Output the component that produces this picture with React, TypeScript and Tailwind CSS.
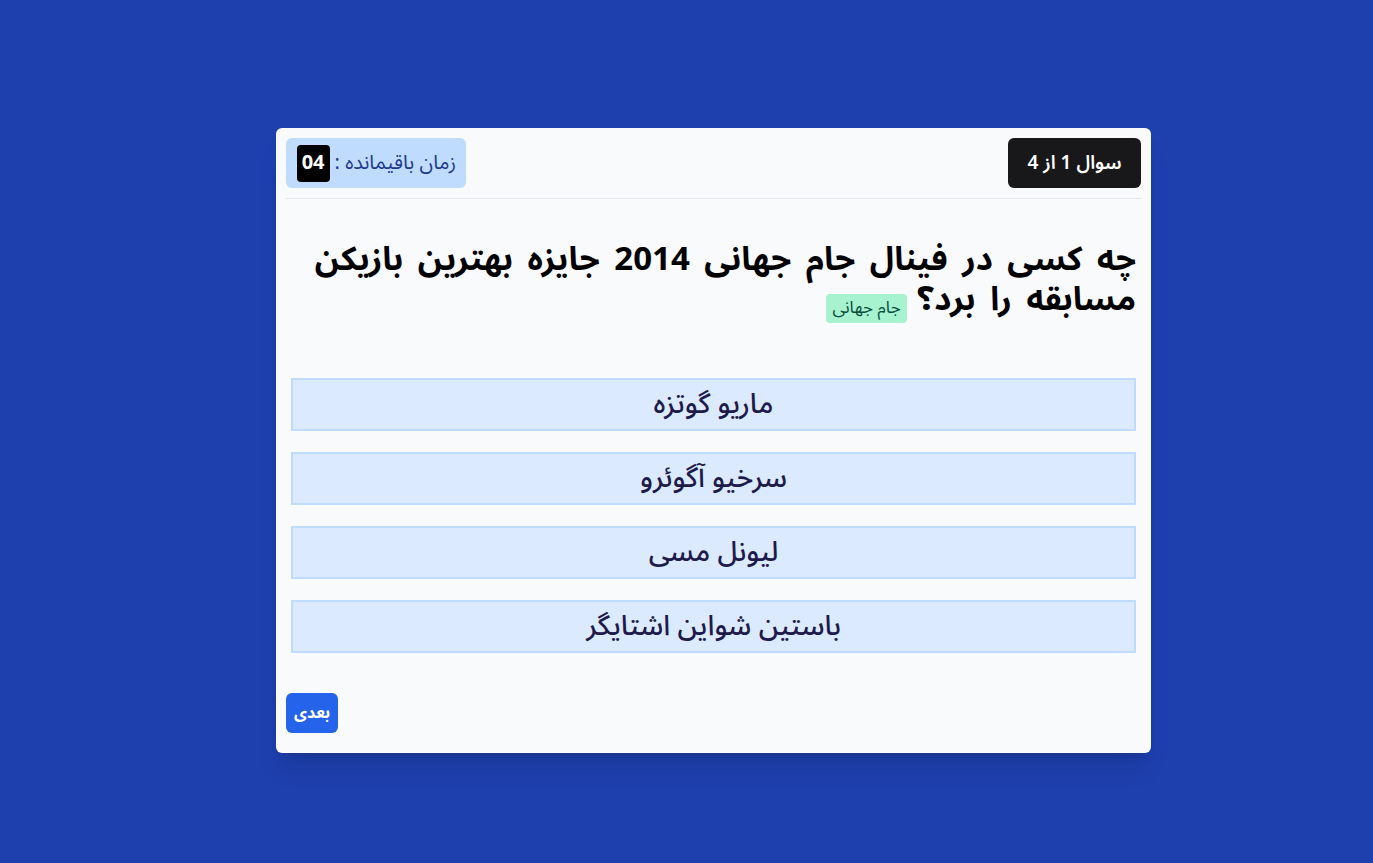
const options = ['ماریو گوتزه', 'سرخیو آگوئرو', 'لیونل مسی', 'باستین شواین اشتایگر']

export default function App() {
  return (
    <div className="min-h-[863px] bg-[#1e40af] pl-[276px] pt-[128px] font-['Noto_Sans_Arabic','DejaVu_Sans',sans-serif]">
      <div dir="rtl" className="w-[875px] h-[625px] bg-[#f9fafb] rounded-md p-[10px] shadow-xl flex flex-col">
        <div className="flex justify-between items-center pb-[10px] border-b border-gray-200">
          <div className="h-[50px] w-[133px] rounded-md bg-[#18181b] text-white font-semibold text-[19px] flex items-center justify-center">
            سوال 1 از 4
          </div>
          <div className="h-[50px] w-[180px] rounded-md bg-[#bfdbfe] text-[#1e3a8a] text-[20px] flex items-center gap-[5px] px-[10px]">
            <span className="whitespace-nowrap">زمان باقیمانده :</span>
            <span className="bg-black text-white font-bold text-xl rounded-sm w-[33px] h-[37px] flex-none flex items-center justify-center">04</span>
          </div>
        </div>
        <h1 className="mt-[41px] px-[5px] text-[33px] leading-10 font-bold text-black [word-spacing:6px]">
          چه کسی در فینال جام جهانی 2014 جایزه بهترین بازیکن مسابقه را برد؟{' '}
          <span className="relative top-[8px] mr-[-4px] inline-block align-middle bg-[#a7f3d0] text-[#064e3b] text-[17px] font-normal leading-[29px] px-[6px] rounded [word-spacing:0px]">جام جهانی</span>
        </h1>
        <div className="mt-[58px] px-[5px] flex flex-col gap-[21px]">
          {options.map((o) => (
            <button key={o} className="h-[53px] w-full bg-[#dbeafe] border-2 border-[#bfdbfe] text-[#1e1b4b] text-[28px] font-medium flex items-center justify-center">
              {o}
            </button>
          ))}
        </div>
        <div className="mt-[40px] flex justify-end">
          <button className="h-[40px] w-[52px] rounded-md bg-[#2563eb] text-white font-bold text-base">بعدی</button>
        </div>
      </div>
    </div>
  )
}
